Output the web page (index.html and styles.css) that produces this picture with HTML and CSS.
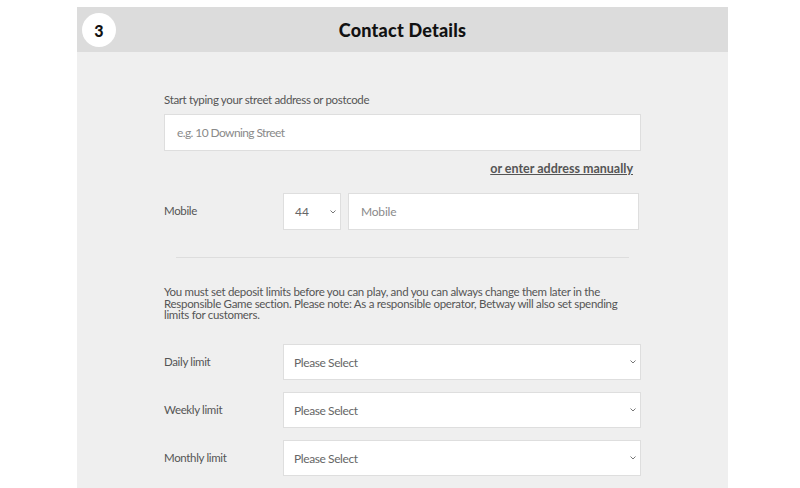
FILE: index.html
```html
<!DOCTYPE html>
<html lang="en">
<head>
<meta charset="utf-8">
<title>Contact Details</title>
<link rel="stylesheet" href="styles.css">
</head>
<body>
<section class="panel">
  <header class="panel-head">
    <span class="step">3</span>
    <h2 class="title">Contact Details</h2>
  </header>
  <div class="panel-body">
    <label class="field-label">Start typing your street address or postcode</label>
    <div class="text-box"><span class="placeholder">e.g. 10 Downing Street</span></div>
    <div class="link-row"><a class="manual-link" href="#">or enter address manually</a></div>

    <div class="row mobile-row">
      <span class="row-label">Mobile</span>
      <div class="row-fields">
        <div class="select code-select"><span class="value">44</span>
          <svg class="chev" width="6" height="4" viewBox="0 0 6 4"><path d="M0.5 0.5 L3 3 L5.5 0.5" fill="none" stroke="#777" stroke-width="1"/></svg>
        </div>
        <div class="text-box mobile-box"><span class="placeholder">Mobile</span></div>
      </div>
    </div>

    <hr class="divider">

    <p class="note">You must set deposit limits before you can play, and you can always change them later in the Responsible Game section. Please note: As a responsible operator, Betway will also set spending limits for customers.</p>

    <div class="limits">
      <div class="row">
        <span class="row-label">Daily limit</span>
        <div class="select wide-select"><span class="value">Please Select</span>
          <svg class="chev" width="6" height="4" viewBox="0 0 6 4"><path d="M0.5 0.5 L3 3 L5.5 0.5" fill="none" stroke="#777" stroke-width="1"/></svg>
        </div>
      </div>
      <div class="row">
        <span class="row-label">Weekly limit</span>
        <div class="select wide-select"><span class="value">Please Select</span>
          <svg class="chev" width="6" height="4" viewBox="0 0 6 4"><path d="M0.5 0.5 L3 3 L5.5 0.5" fill="none" stroke="#777" stroke-width="1"/></svg>
        </div>
      </div>
      <div class="row">
        <span class="row-label">Monthly limit</span>
        <div class="select wide-select"><span class="value">Please Select</span>
          <svg class="chev" width="6" height="4" viewBox="0 0 6 4"><path d="M0.5 0.5 L3 3 L5.5 0.5" fill="none" stroke="#777" stroke-width="1"/></svg>
        </div>
      </div>
    </div>
  </div>
</section>
</body>
</html>
```

FILE: styles.css
```css
html, body {
  margin: 0;
  padding: 0;
  background: #ffffff;
  font-family: "Lato", "Open Sans", sans-serif;
  color: #555555;
}

.panel {
  margin: 7px 72px 0 77px;
  background: #efefef;
  height: 481px;
  overflow: hidden;
}

.panel-head {
  position: relative;
  height: 45px;
  background: #dcdcdc;
  display: flex;
  align-items: center;
  justify-content: center;
}

.step {
  position: absolute;
  left: 5px;
  top: 6px;
  width: 34px;
  height: 34px;
  border-radius: 50%;
  background: #ffffff;
  display: flex;
  align-items: center;
  justify-content: center;
  font-weight: 900;
  font-size: 16px;
  color: #111111;
}

.title {
  margin: 0;
  font-size: 18px;
  font-weight: 900;
  color: #111111;
  letter-spacing: 0.2px;
}

.panel-body {
  padding: 41px 87px 0 87px;
}

.field-label {
  display: block;
  font-size: 11.5px;
  line-height: 14px;
  letter-spacing: -0.35px;
  color: #555555;
  margin-bottom: 7px;
}

.text-box {
  box-sizing: border-box;
  height: 37px;
  background: #ffffff;
  border: 1px solid #dedede;
  display: flex;
  align-items: center;
  padding-left: 12px;
}

.placeholder {
  font-size: 12px;
  letter-spacing: -0.6px;
  color: #8a8a8a;
}

.link-row {
  margin-top: 9px;
  text-align: right;
  padding-right: 8px;
  height: 14px;
  line-height: 14px;
}

.manual-link {
  font-size: 12.5px;
  font-weight: 700;
  color: #555555;
  text-decoration: underline;
}

.row {
  display: flex;
  align-items: center;
}

.row-label {
  width: 119px;
  flex: none;
  font-size: 11.5px;
  letter-spacing: -0.35px;
  color: #555555;
  position: relative;
  top: -1px;
}

.mobile-row {
  margin-top: 19px;
}

.row-fields {
  flex: 1;
  display: flex;
  gap: 7px;
  margin-right: 2px;
}

.select {
  box-sizing: border-box;
  background: #ffffff;
  border: 1px solid #dedede;
  display: flex;
  align-items: center;
  justify-content: space-between;
  padding: 0 4px 0 10px;
}

.value {
  font-size: 12px;
  letter-spacing: -0.4px;
  color: #666666;
}

.code-select {
  width: 58px;
  height: 37px;
}

.code-select .value {
  padding-left: 1px;
  letter-spacing: 0;
}

.mobile-box .placeholder {
  letter-spacing: -0.2px;
}

.mobile-box {
  flex: 1;
}

.divider {
  margin: 27px 12px 0 12px;
  border: 0;
  border-top: 1px solid #dddddd;
  height: 0;
}

.note {
  margin: 28px 0 0 0;
  font-size: 11.5px;
  line-height: 11.7px;
  letter-spacing: -0.3px;
  color: #555555;
}

.limits {
  margin-top: 23px;
  display: flex;
  flex-direction: column;
  gap: 12px;
}

.wide-select {
  flex: 1;
  height: 36px;
}
```
